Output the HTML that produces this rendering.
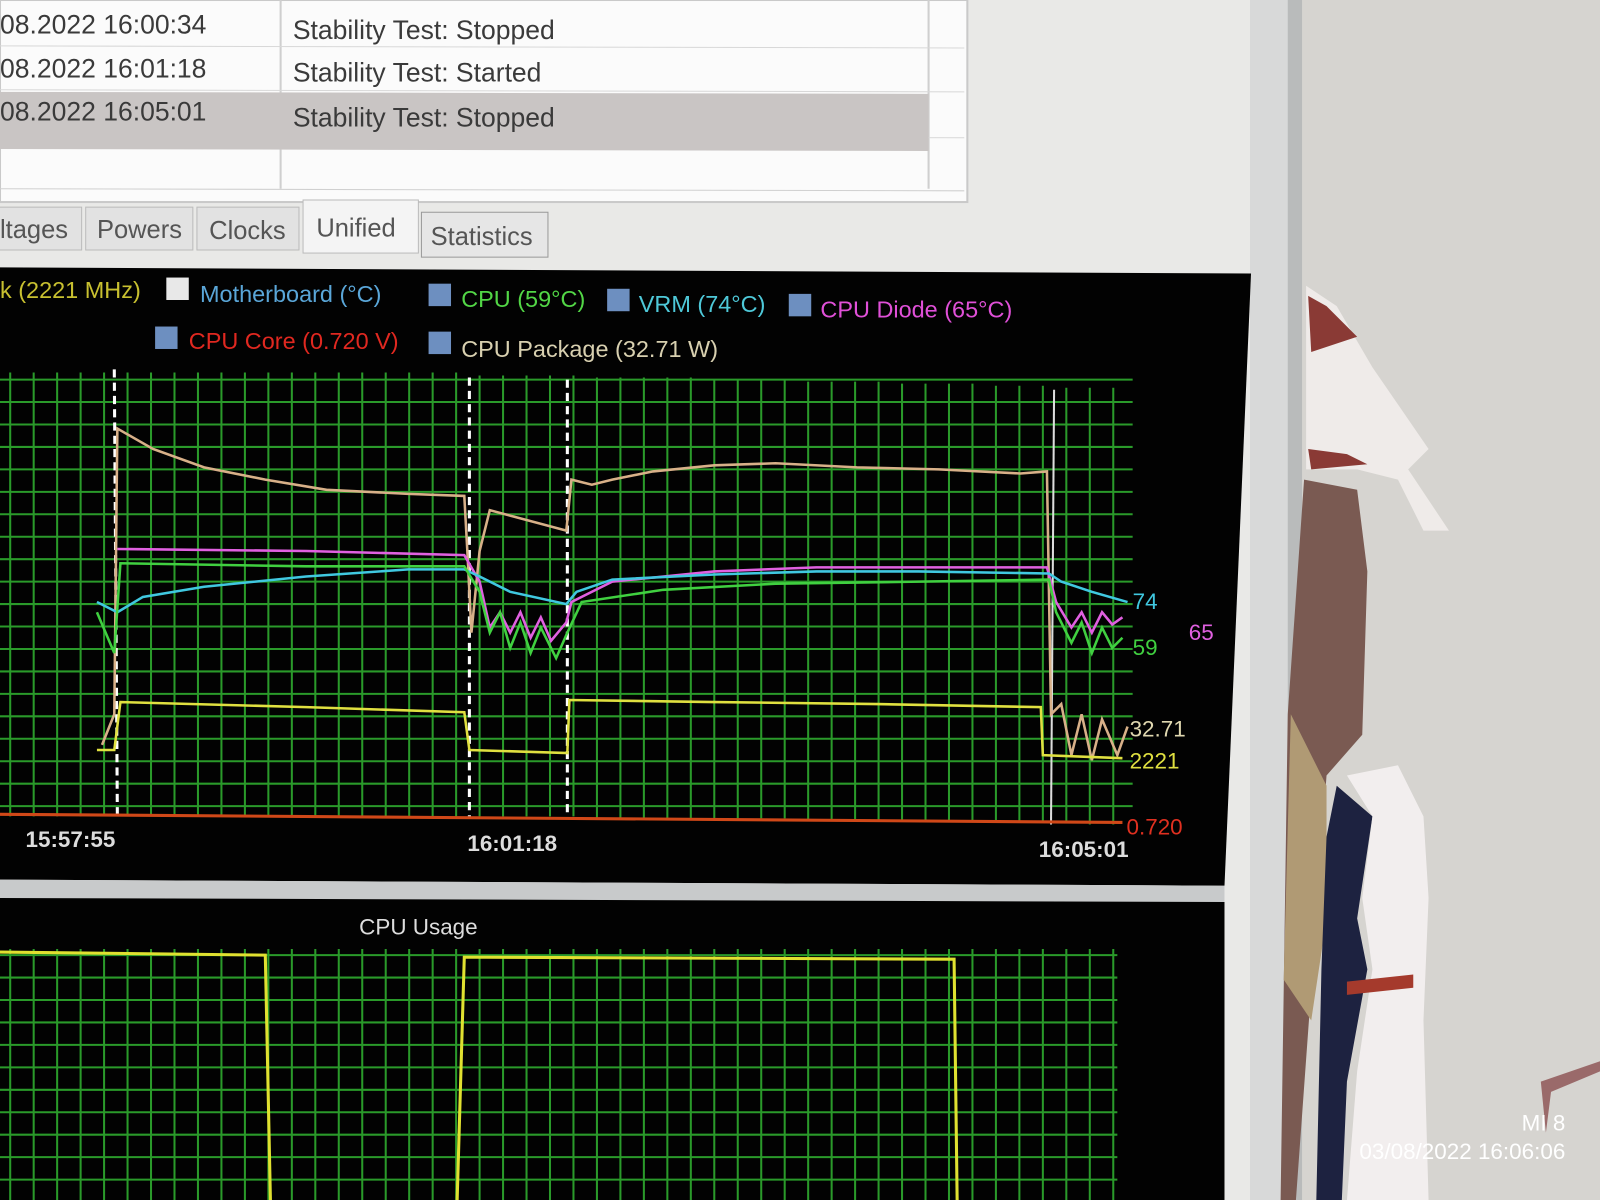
<!DOCTYPE html>
<html><head><meta charset="utf-8"><style>
html,body{margin:0;padding:0;width:1600px;height:1200px;overflow:hidden;background:#d9d7d3}
svg{display:block}
text{font-family:"Liberation Sans","DejaVu Sans",sans-serif}
</style></head><body>
<svg width="1600" height="1200" viewBox="0 0 1568 1176" preserveAspectRatio="none" xmlns="http://www.w3.org/2000/svg">
<rect x="0" y="0" width="1568" height="1176" fill="#d6d4d0"/>
<rect x="0" y="0" width="1255" height="1176" fill="#e9e9e7"/>
<rect x="1225" y="0" width="45" height="1176" fill="#d8d9d9"/>
<rect x="1262" y="0" width="14" height="1176" fill="#b9bbbb"/>
<!-- figure -->
<path d="M1280 280 L1310 300 L1345 360 L1400 440 L1380 460 L1420 520 L1395 520 L1370 470 L1330 460 L1280 460 Z" fill="#efebe9"/>
<path d="M1282 290 L1300 300 L1330 330 L1285 345 Z M1282 440 L1320 445 L1340 455 L1285 460 Z" fill="#8a3a35"/>
<path d="M1278 470 L1330 480 L1340 560 L1335 720 L1300 760 L1290 900 L1270 1176 L1255 1176 L1262 700 Z" fill="#7a5a52"/>
<path d="M1265 700 L1300 770 L1300 900 L1285 1000 L1258 960 Z" fill="#b09a74"/>
<path d="M1310 770 L1345 800 L1330 900 L1340 950 L1320 1060 L1315 1176 L1290 1176 L1295 950 L1300 820 Z" fill="#1d2240"/>
<path d="M1320 760 L1370 750 L1395 800 L1400 880 L1395 1000 L1400 1176 L1320 1176 L1330 1050 L1345 950 L1335 880 L1345 800 Z" fill="#f2eeee"/>
<path d="M1320 962 L1385 955 L1385 968 L1320 975 Z" fill="#a53a2c"/>
<path d="M1510 1060 L1568 1040 L1568 1050 L1520 1070 L1515 1110 Z" fill="#9a6a6a"/>
<!-- top table -->
<rect x="0" y="0" width="948" height="198" fill="#fbfbfb"/>
<rect x="0" y="0" width="948" height="198" fill="none" stroke="#c9c9c9" stroke-width="2"/>
<line x1="275" y1="0" x2="275" y2="185" stroke="#cfcfcf" stroke-width="2"/>
<line x1="910" y1="0" x2="910" y2="185" stroke="#cfcfcf" stroke-width="2"/>
<line x1="0" y1="45" x2="945" y2="47" stroke="#d8d8d8"/>
<line x1="0" y1="88" x2="945" y2="90" stroke="#d8d8d8"/>
<line x1="0" y1="133" x2="945" y2="135" stroke="#d8d8d8"/>
<line x1="0" y1="185" x2="945" y2="187" stroke="#d0d0d0"/>
<path d="M0 90 L910 92 L910 148 L0 146 Z" fill="#c9c5c4"/>
<g font-size="26" fill="#3a3a3a">
<text x="0" y="33">08.2022 16:00:34</text>
<text x="287" y="38">Stability Test: Stopped</text>
<text x="0" y="76">08.2022 16:01:18</text>
<text x="287" y="80">Stability Test: Started</text>
<text x="0" y="118">08.2022 16:05:01</text>
<text x="287" y="124">Stability Test: Stopped</text>
</g>
<g font-size="25" fill="#555">
<rect x="-5" y="203" width="85" height="42" fill="#e2e2e2" stroke="#bbb"/>
<text x="0" y="233">ltages</text>
<rect x="84" y="203" width="105" height="42" fill="#e2e2e2" stroke="#bbb"/>
<text x="95" y="233">Powers</text>
<rect x="193" y="203" width="100" height="42" fill="#e2e2e2" stroke="#bbb"/>
<text x="205" y="234">Clocks</text>
<rect x="297" y="196" width="113" height="52" fill="#f4f4f4" stroke="#bbb"/>
<text x="310" y="232">Unified</text>
<rect x="413" y="208" width="124" height="44" fill="#e6e6e6" stroke="#999"/>
<text x="422" y="240">Statistics</text>
</g>
<path d="M0 262 L1226 268 L1200 868 L0 862 Z" fill="#020202"/>
<g font-size="23">
<text x="0" y="292" fill="#c8c030">k (2221 MHz)</text>
<rect x="163" y="272" width="22" height="22" fill="#e8e8e8"/>
<text x="196" y="296" fill="#5aa6d8">Motherboard (°C)</text>
<rect x="420" y="278" width="22" height="22" fill="#6d8fc0"/>
<text x="452" y="301" fill="#52d646">CPU (59°C)</text>
<rect x="595" y="283" width="22" height="22" fill="#6d8fc0"/>
<text x="626" y="306" fill="#4ec8d8">VRM (74°C)</text>
<rect x="773" y="288" width="22" height="22" fill="#6d8fc0"/>
<text x="804" y="311" fill="#e050d8">CPU Diode (65°C)</text>
<rect x="152" y="320" width="22" height="22" fill="#6d8fc0"/>
<text x="185" y="342" fill="#e02820">CPU Core (0.720 V)</text>
<rect x="420" y="325" width="22" height="22" fill="#6d8fc0"/>
<text x="452" y="350" fill="#d8d0b0">CPU Package (32.71 W)</text>
</g>
<g stroke="#2a9a2a" stroke-width="2">
<path d="M0 372H1110M0 394H1110M0 416H1110M0 438H1110M0 460H1110M0 482H1110M0 504H1110M0 526H1110M0 548H1110M0 570H1110M0 592H1110M0 614H1110M0 636H1110M0 658H1110M0 680H1110M0 702H1110M0 724H1110M0 746H1110M0 768H1110M0 790H1110"/>
<path d="M10 365V800M33 365V800M56 365V800M79 365V800M102 365V800M125 365V800M148 365V800M171 365V800M194 365V800M217 365V800M240 365V800M263 365V800M286 365V800M309 365V800M332 365V800M355 365V800M378 365V800M401 365V800M424 365V800M447 365V800M470 368V800M493 368V800M516 368V800M539 368V800M562 368V800M585 370V802M608 370V802M631 370V802M654 370V802M677 370V802M700 372V802M723 372V802M746 372V802M769 372V802M792 374V804M815 374V804M838 374V804M861 374V804M884 376V804M907 376V804M930 376V806M953 376V806M976 378V806M999 378V806M1022 378V806M1045 380V806M1068 380V808M1091 380V808"/>
</g>
<g stroke="#fff" stroke-width="3" stroke-dasharray="8 5">
<line x1="112" y1="362" x2="115" y2="798"/>
<line x1="460" y1="370" x2="460" y2="802"/>
<line x1="556" y1="372" x2="556" y2="802"/>
</g>
<line x1="1033" y1="382" x2="1030" y2="808" stroke="#ddd" stroke-width="2"/>
<g fill="none" stroke-width="2.5">
<polyline stroke="#d8b088" points="100,730 112,700 115,420 150,440 200,458 260,470 320,480 400,484 455,486 458,540 462,620 470,540 480,500 555,520 560,470 580,475 600,470 640,462 700,456 760,454 840,458 920,460 1000,464 1026,462 1030,700 1040,690 1050,740 1060,700 1070,745 1080,705 1095,740 1105,712"/>
<polyline stroke="#e060e0" points="115,538 300,540 455,544 470,570 480,615 490,600 500,620 510,600 520,625 530,605 540,628 555,610 560,590 600,570 700,560 800,556 900,556 1026,556 1035,590 1050,615 1060,600 1070,620 1080,600 1090,612 1100,605"/>
<polyline stroke="#40c8e0" points="95,590 115,600 140,585 200,575 300,565 400,558 455,558 470,565 500,580 555,592 565,580 600,568 700,563 800,560 900,560 1028,562 1040,570 1070,580 1105,590"/>
<polyline stroke="#40d040" points="95,600 112,640 118,552 300,555 455,555 470,580 480,620 490,600 500,635 510,610 520,640 530,615 545,645 556,620 570,590 650,578 760,572 900,570 1028,568 1035,600 1050,630 1060,610 1070,640 1080,615 1090,635 1100,625"/>
<polyline stroke="#e0e040" points="95,735 112,735 118,688 300,693 455,698 460,735 556,738 558,686 700,688 860,690 1020,693 1022,740 1100,743"/>
<line x1="0" y1="798" x2="1100" y2="806" stroke="#d04818" stroke-width="3"/>
</g>
<g font-size="22">
<text x="1110" y="597" fill="#40c8e0">74</text>
<text x="1165" y="627" fill="#e060e0">65</text>
<text x="1110" y="642" fill="#40d040">59</text>
<text x="1107" y="722" fill="#e0d8b0">32.71</text>
<text x="1107" y="753" fill="#e0e040">2221</text>
<text x="1104" y="818" fill="#e03020">0.720</text>
<text x="25" y="830" fill="#ddd" font-weight="bold">15:57:55</text>
<text x="458" y="834" fill="#ddd" font-weight="bold">16:01:18</text>
<text x="1018" y="840" fill="#ddd" font-weight="bold">16:05:01</text>
</g>
<path d="M0 862 L1200 868 L1200 885 L0 880 Z" fill="#c8cacb"/>
<path d="M0 880 L1200 884 L1200 1176 L0 1176 Z" fill="#020202"/>
<text x="352" y="916" font-size="22" fill="#ddd">CPU Usage</text>
<g stroke="#2a9a2a" stroke-width="2">
<path d="M0 936H1095M0 958H1095M0 980H1095M0 1002H1095M0 1024H1095M0 1046H1095M0 1068H1095M0 1090H1095M0 1112H1095M0 1134H1095M0 1156H1095"/>
<path d="M10 930V1176M33 930V1176M56 930V1176M79 930V1176M102 930V1176M125 930V1176M148 930V1176M171 930V1176M194 930V1176M217 930V1176M240 930V1176M263 930V1176M286 930V1176M309 930V1176M332 930V1176M355 930V1176M378 930V1176M401 930V1176M424 930V1176M447 930V1176M470 930V1176M493 930V1176M516 930V1176M539 930V1176M562 930V1176M585 930V1176M608 930V1176M631 930V1176M654 930V1176M677 930V1176M700 930V1176M723 930V1176M746 930V1176M769 930V1176M792 930V1176M815 930V1176M838 930V1176M861 930V1176M884 930V1176M907 930V1176M930 930V1176M953 930V1176M976 930V1176M999 930V1176M1022 930V1176M1045 930V1176M1068 930V1176M1091 930V1176"/>
</g>
<g fill="none" stroke="#e0e030" stroke-width="3">
<polyline points="0,933 260,936 265,1176"/>
<polyline points="448,1176 455,938 935,940 938,1176"/>
</g>
<g font-size="22" fill="#fff" text-anchor="end">
<text x="1534" y="1108">MI 8</text>
<text x="1534" y="1136">03/08/2022 16:06:06</text>
</g>
</svg>
</body></html>
